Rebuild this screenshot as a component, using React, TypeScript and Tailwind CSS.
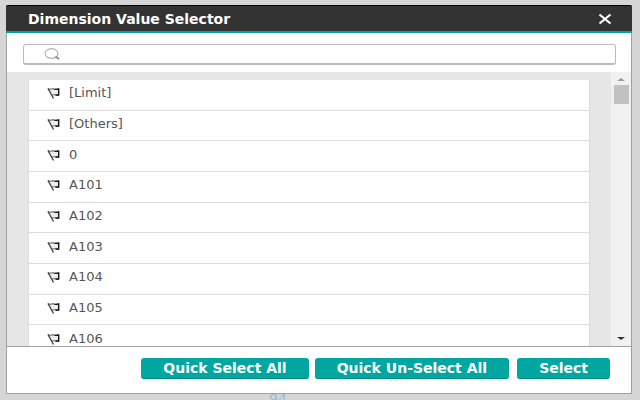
import React, { useState } from "react";

const dimensionValues = [
  "[Limit]",
  "[Others]",
  "0",
  "A101",
  "A102",
  "A103",
  "A104",
  "A105",
  "A106",
];

function FlagIcon() {
  return (
    <svg
      width="13"
      height="12"
      viewBox="0 0 13 12"
      fill="none"
      className="shrink-0"
      aria-hidden="true"
    >
      <path
        d="M1 1.500C3 3.200 4.500 1.500 6.500 1.900S9.500 3 11.500 2V8C9.500 9 8.500 7.200 6.500 7.800L4.500 8.300"
        fill="#eee"
        stroke="#666"
        strokeWidth="1.100"
      />
      <path d="M1 1.500L6.500 11.500" stroke="#444" strokeWidth="1.400" />
      <path d="M7.500 2.400L11.700 2.100V8L8.500 8" stroke="#1a1a1a" strokeWidth="1.400" />
    </svg>
  );
}

function SearchIcon() {
  return (
    <svg
      width="16"
      height="12"
      viewBox="0 0 16 12"
      fill="none"
      className="shrink-0"
      aria-hidden="true"
    >
      <ellipse cx="7.500" cy="5.500" rx="6.500" ry="4.800" stroke="#999" />
      <path d="M11.500 8.500L15 11" stroke="#888" strokeWidth="1.800" />
    </svg>
  );
}

function ActionButton({ label }: { label: string }) {
  return (
    <button
      type="button"
      className="h-[21px] px-[22px] rounded-[3px] border-b border-[#008a83] bg-[#00a69f] text-sm leading-5 font-bold text-white whitespace-nowrap"
    >
      {label}
    </button>
  );
}

export default function App() {
  const [query, setQuery] = useState("");
  const rows = dimensionValues.filter((v) =>
    v.toLowerCase().includes(query.toLowerCase())
  );

  return (
    <div className="h-screen flex flex-col overflow-hidden bg-[#d6d6d6] pt-[5px] pl-1.5 pr-2 font-['DejaVu_Sans',sans-serif]">
      <div
        role="dialog"
        aria-labelledby="selector-title"
        className="flex-1 min-h-0 flex flex-col bg-white border-x border-b border-[#a0a0a0]"
      >
        <header className="-mx-px h-7 shrink-0 flex items-center justify-between pl-[22px] pr-5 rounded-t-xs border-t border-t-black border-b-2 border-b-[#00a69f] bg-[#333]">
          <h1 id="selector-title" className="text-sm font-bold text-white">
            Dimension Value Selector
          </h1>
          <button type="button" aria-label="Close">
            <svg width="14" height="12" viewBox="0 0 14 12" aria-hidden="true">
              <path d="M1.500 1.500L12.500 10.500M12.500 1.500L1.500 10.500" stroke="#fff" strokeWidth="2.200" />
            </svg>
          </button>
        </header>

        <div className="shrink-0 pt-[11px] pb-[7px] pl-4 pr-[15px]">
          <label className="h-[21px] flex items-center gap-2 pl-5 pr-2 rounded-[3px] border border-b-2 border-[#bbb]">
            <SearchIcon />
            <input
              type="text"
              aria-label="Search values"
              value={query}
              onChange={(e) => setQuery(e.target.value)}
              className="flex-1 min-w-0 text-[13px] text-[#555] outline-none"
            />
          </label>
        </div>

        <div className="flex-1 min-h-0 flex bg-[#e6e6e6] border-b border-[#a0a0a0]">
          <div className="flex-1 overflow-hidden pt-2 pl-[21px] pr-[21px]">
            <ul className="h-[276px] grid grid-rows-9 bg-white border-x border-[#dedede]">
              {rows.map((value) => (
                <li
                  key={value}
                  className="flex items-center gap-[9px] pl-[18px] pb-[3px] border-b border-[#dcdcdc] text-[13px] leading-4 text-[#555]"
                >
                  <FlagIcon />
                  {value}
                </li>
              ))}
            </ul>
          </div>
          <div className="w-5 shrink-0 flex flex-col items-center justify-between bg-[#f1f1f1] pt-1.5 pb-1.5">
            <div className="flex flex-col items-center gap-1">
              <svg width="8" height="3" viewBox="0 0 8 3" aria-hidden="true">
                <path d="M0 3L4 0L8 3Z" fill="#999" />
              </svg>
              <div className="w-[15px] h-[19px] bg-[#c1c1c1]" />
            </div>
            <svg width="8" height="3" viewBox="0 0 8 3" aria-hidden="true">
              <path d="M0 0H8L4 3Z" fill="#333" />
            </svg>
          </div>
        </div>

        <footer className="shrink-0 flex justify-end gap-2 pt-[11px] pb-3.5 pr-[21px]">
          <div className="flex gap-1.5">
            <ActionButton label="Quick Select All" />
            <ActionButton label="Quick Un-Select All" />
          </div>
          <ActionButton label="Select" />
        </footer>
      </div>
      <div className="h-1.5 shrink-0 overflow-hidden pl-[263px] text-sm leading-[10px] text-[#9cbdd3]">
        94
      </div>
    </div>
  );
}
